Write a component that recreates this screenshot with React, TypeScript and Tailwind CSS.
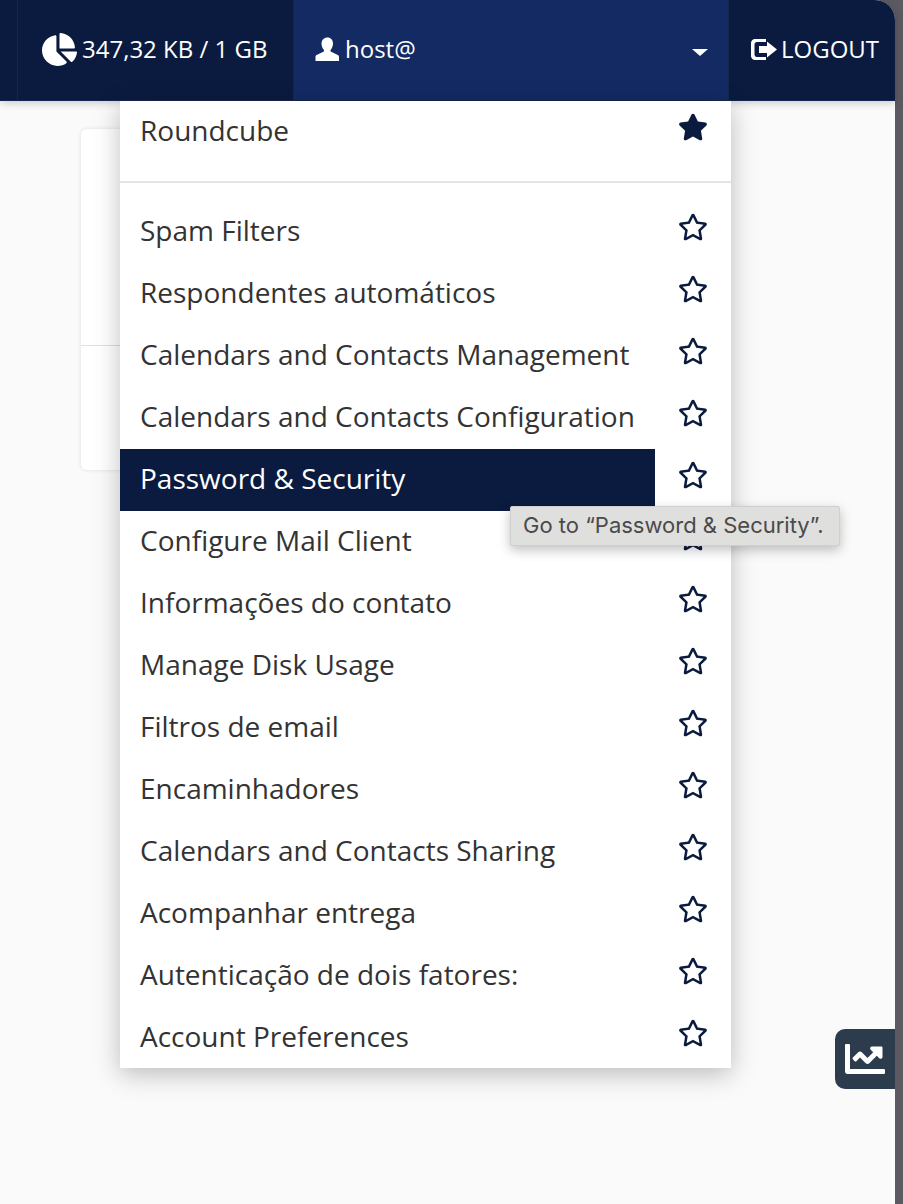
import { FaChartPie, FaChartLine, FaStar, FaRegStar } from "react-icons/fa";

const items = [
  "Spam Filters",
  "Respondentes automáticos",
  "Calendars and Contacts Management",
  "Calendars and Contacts Configuration",
  "Password & Security",
  "Configure Mail Client",
  "Informações do contato",
  "Manage Disk Usage",
  "Filtros de email",
  "Encaminhadores",
  "Calendars and Contacts Sharing",
  "Acompanhar entrega",
  "Autenticação de dois fatores:",
  "Account Preferences",
];

function UserIcon() {
  return (
    <svg width="25" height="25" viewBox="0 0 25 25" fill="currentColor">
      <path d="M12.5 .5c3.400 0 5.500 2.600 5.500 6 0 2.600-1 4.800-2.200 6.200-.6.8-.4 1.600.4 2l6.600 3.400c.8.4 1.200.9 1.200 1.800V24H.5v-4.100c0-.9.4-1.400 1.200-1.800l6.600-3.400c.8-.4 1-1.200.4-2C7.500 11.300 6.500 9.100 6.500 6.500c0-3.400 2.600-6 6-6z" />
    </svg>
  );
}

function LogoutIcon() {
  return (
    <svg width="26" height="21" viewBox="0 0 26 21" fill="currentColor">
      <path d="M4 0h11v3H6C4.500 3 3.500 4 3.500 5.500v10C3.500 17 4.500 18 6 18h9v3H4c-2.200 0-4-1.800-4-4V4c0-2.200 1.800-4 4-4z" />
      <path d="M8 7h8V2.500l10 8-10 8V14H8z" />
    </svg>
  );
}

function Row({ label, active, filled }: { label: string; active?: boolean; filled?: boolean }) {
  return (
    <li className="flex h-[62px] items-center">
      <div
        className={
          active
            ? "flex h-full w-[535px] items-center whitespace-nowrap bg-[#0b1b3f] pb-[4px] pl-[20px] text-white"
            : "flex h-full w-[535px] items-center whitespace-nowrap pb-[4px] pl-[20px] text-[#333333]"
        }
      >
        {label}
      </div>
      <div className="ml-[23px] flex h-full -translate-y-[5px] items-center text-[#0b1b3f]">
        {filled ? <FaStar size={30} /> : <FaRegStar size={30} />}
      </div>
    </li>
  );
}

export default function App() {
  return (
    <div className="relative h-[1204px] w-[903px] overflow-hidden bg-[#5a5a60] font-['Open_Sans',sans-serif]">
      <div className="relative h-full w-[895px] rounded-tr-[20px] bg-[#fafafa]">
        <header className="flex h-[101px] overflow-hidden rounded-tr-[20px] border-b border-[#14284f] bg-[#0b1b3f] text-white shadow-[0_2px_8px_rgba(0,0,0,0.2)]">
          <div className="w-[18px] border-r border-[#14284f]" />
          <div className="flex w-[276px] items-center border-r border-[#14284f] pb-[2px] pl-[24px] text-[24px]">
            <FaChartPie size={35} className="mr-[5px]" />
            <span>347,32 KB / 1 GB</span>
          </div>
          <div className="flex w-[434px] items-center bg-[#142a63] pb-[2px] pl-[21px] text-[24px]">
            <UserIcon />
            <span className="ml-[5px]">host@</span>
            <span className="ml-auto mr-[20px] mt-[6px] h-0 w-0 border-x-[8px] border-t-[7px] border-x-transparent border-t-white" />
          </div>
          <div className="flex flex-1 items-center border-l border-[#14284f] pb-[2px] pl-[22px] text-[24px]">
            <LogoutIcon />
            <span className="ml-[4px]">LOGOUT</span>
          </div>
        </header>

        <main className="pl-[81px] pt-[28px]">
          <section className="h-[341px] w-[500px] rounded-[6px] bg-white shadow-[0_0_4px_rgba(0,0,0,0.12)]">
            <div className="h-[217px] border-b border-[#e0e0e0]" />
          </section>
        </main>

        <nav className="absolute left-[120px] top-[101px] h-[967px] w-[611px] overflow-hidden bg-white text-[28px] shadow-[0_6px_24px_rgba(0,0,0,0.25)]">
          <ul>
            <Row label="Roundcube" filled />
          </ul>
          <div className="mb-[18px] mt-[18px] h-[2px] bg-[#e5e5e5]" />
          <ul>
            {items.map((label) => (
              <Row key={label} label={label} active={label === "Password & Security"} />
            ))}
          </ul>
        </nav>

        <div className="absolute left-[510px] top-[506px] flex h-[40px] w-[330px] items-center rounded-[2px] border border-[#cfcfcf] bg-[#dfdfdd] pb-[2px] pl-[12px] font-['Inter',sans-serif] text-[22px] text-[#4a4a4a] shadow-[0_4px_12px_rgba(0,0,0,0.25)]">
          Go to “Password &amp; Security”.
        </div>

        <button className="absolute left-[835px] top-[1029px] flex h-[60px] w-[60px] items-center justify-center rounded-l-[10px] bg-[#2d3c4d] text-white">
          <FaChartLine size={40} />
        </button>
      </div>
    </div>
  );
}
